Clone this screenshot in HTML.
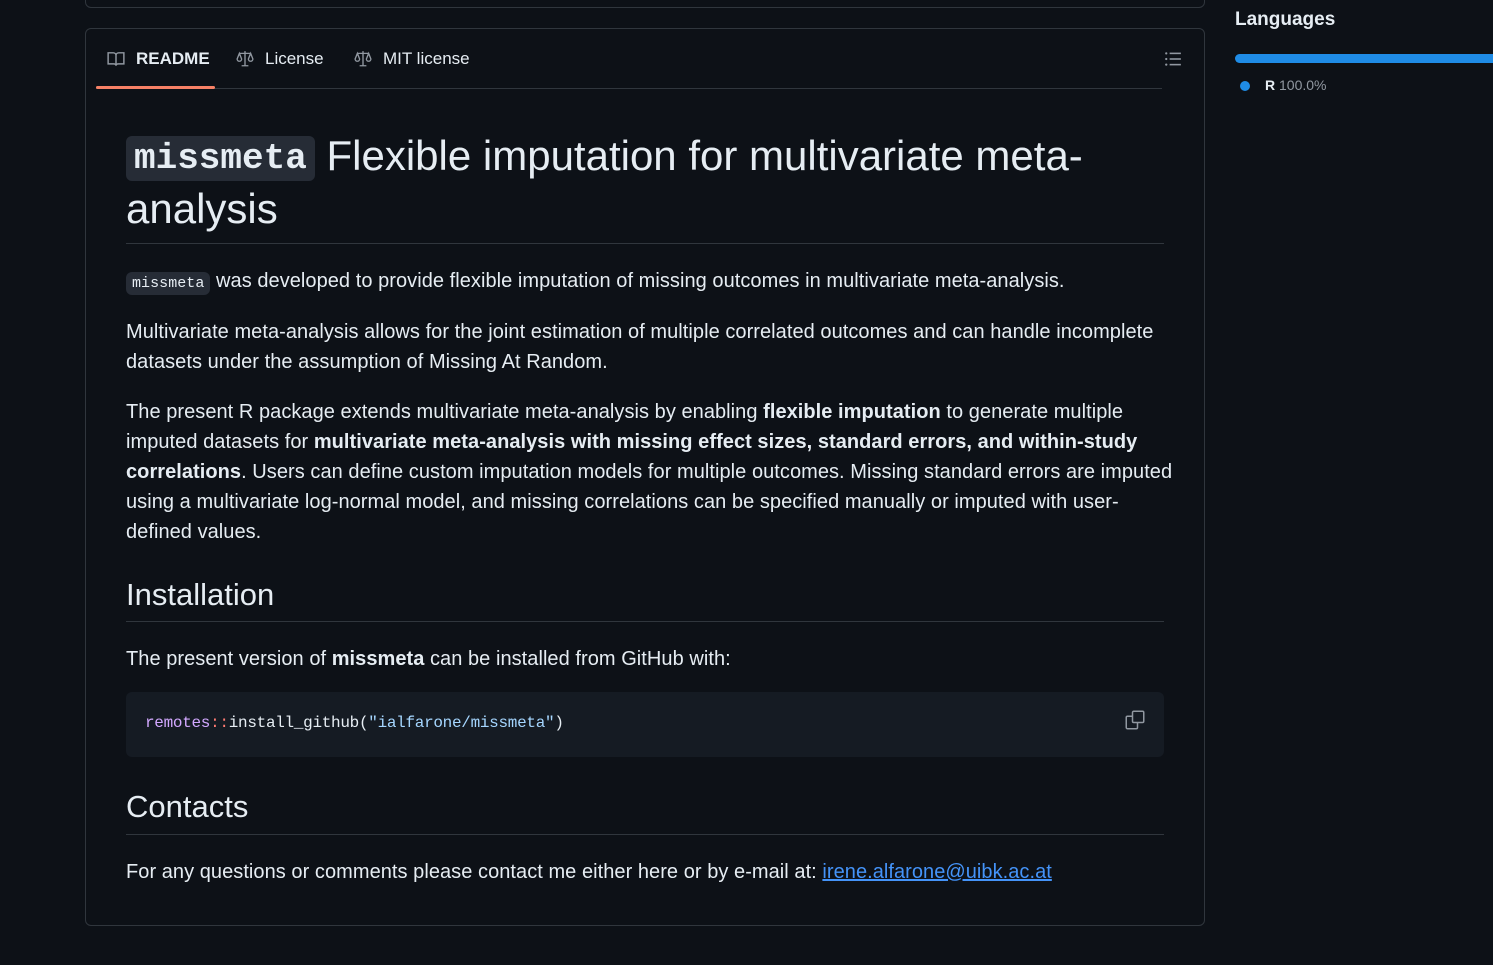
<!DOCTYPE html><html><head><meta charset="utf-8"><style>
body{margin:0;background:#0d1117;width:1493px;height:965px;overflow:hidden;font-family:"Liberation Sans",sans-serif;color:#e6edf3;position:relative}
.box0{position:absolute;left:85px;top:-20px;width:1118px;height:26px;border:1px solid #30363d;border-radius:6px}
.box{position:absolute;left:85px;top:28px;width:1118px;height:896px;border:1px solid #30363d;border-radius:6px}
.tabs{position:absolute;left:0;top:0;width:1066px;height:59px;border-bottom:1px solid #30363d;margin-left:10px}
.tab{position:absolute;top:20px;font-size:17px;color:#e6edf3;display:flex;align-items:center;gap:10px}
.under{position:absolute;left:0;top:57px;width:119px;height:3px;background:#f78166;border-radius:2px}
.c{position:absolute;left:40px;width:1038px}
p{margin:0;font-size:20px;line-height:30px;white-space:nowrap;letter-spacing:0.05px}
code{font-family:"Liberation Mono",monospace;background:#262c36;border-radius:6px;padding:3px 6px;font-size:15px}
h1{margin:0;font-size:42px;font-weight:normal;line-height:53px}
h2{margin:0;font-size:31px;font-weight:normal;line-height:36px}
hr{border:0;border-top:1px solid #30363d;margin:0}
b{font-weight:bold}
.pre{position:absolute;left:40px;top:663px;width:1038px;height:65px;background:#151b23;border-radius:6px}
</style></head><body>
<div class="box0"></div>
<div class="box">
 <div class="tabs">
  <div class="tab" style="left:10px;font-weight:bold"><svg width="20" height="18" viewBox="0 0 16 16" fill="none" stroke="#9198a1" stroke-width="1.3"><path d="M1 2.5h4.5c1.4 0 2.5 1 2.5 2.3V14c0-1-1-1.7-2-1.7H1zM15 2.5h-4.5C9.1 2.5 8 3.5 8 4.8V14c0-1 1-1.7 2-1.7h5z"/></svg>README</div>
  <div class="tab" style="left:139px"><svg width="20" height="18" viewBox="0 0 16 16" fill="none" stroke="#9198a1" stroke-width="1.2"><path d="M8 1v13M3 3h10M5 14h6M3 3l-2 5a2 2 0 004 0zM13 3l-2 5a2 2 0 004 0z"/></svg>License</div>
  <div class="tab" style="left:257px"><svg width="20" height="18" viewBox="0 0 16 16" fill="none" stroke="#9198a1" stroke-width="1.2"><path d="M8 1v13M3 3h10M5 14h6M3 3l-2 5a2 2 0 004 0zM13 3l-2 5a2 2 0 004 0z"/></svg>MIT license</div>
  <div class="under"></div>
 </div>
 <svg style="position:absolute;left:1077px;top:21px" width="20" height="18" viewBox="0 0 16 16" fill="#9198a1"><circle cx="2" cy="3" r="1"/><circle cx="2" cy="8" r="1"/><circle cx="2" cy="13" r="1"/><rect x="5" y="2.3" width="10" height="1.4"/><rect x="5" y="7.3" width="10" height="1.4"/><rect x="5" y="12.3" width="10" height="1.4"/></svg>
 <div class="c" style="top:100px"><h1><code style="font-size:36px;padding:2px 8px;font-weight:bold;line-height:1;vertical-align:2px">missmeta</code> Flexible imputation for multivariate meta-<br>analysis</h1></div>
 <div class="c" style="top:214px"><hr></div>
 <div class="c" style="top:237px"><p><code>missmeta</code> was developed to provide flexible imputation of missing outcomes in multivariate meta-analysis.</p></div>
 <div class="c" style="top:288px"><p>Multivariate meta-analysis allows for the joint estimation of multiple correlated outcomes and can handle incomplete<br>datasets under the assumption of Missing At Random.</p></div>
 <div class="c" style="top:368px"><p>The present R package extends multivariate meta-analysis by enabling <b>flexible imputation</b> to generate multiple<br>imputed datasets for <b>multivariate meta-analysis with missing effect sizes, standard errors, and within-study<br>correlations</b>. Users can define custom imputation models for multiple outcomes. Missing standard errors are imputed<br>using a multivariate log-normal model, and missing correlations can be specified manually or imputed with user-<br>defined values.</p></div>
 <div class="c" style="top:548px"><h2>Installation</h2></div>
 <div class="c" style="top:592px"><hr></div>
 <div class="c" style="top:615px"><p>The present version of <b>missmeta</b> can be installed from GitHub with:</p></div>
 <div class="pre"><div style="position:absolute;left:19px;top:22px;font-family:'Liberation Mono',monospace;font-size:16px;white-space:nowrap;letter-spacing:-0.3px"><span style="color:#d2a8ff">remotes</span><span style="color:#ff7b72">::</span>install_github(<span style="color:#a5d6ff">"ialfarone/missmeta"</span>)</div>
 <svg style="position:absolute;right:19px;top:18px" width="20" height="20" viewBox="0 0 16 16" fill="none" stroke="#9198a1" stroke-width="1.2"><rect x="1" y="5" width="9" height="10" rx="1"/><rect x="6" y="1" width="9" height="9" rx="1" fill="#151b23"/></svg></div>
 <div class="c" style="top:760px"><h2>Contacts</h2></div>
 <div class="c" style="top:805px"><hr></div>
 <div class="c" style="top:828px"><p>For any questions or comments please contact me either here or by e-mail at: <a style="color:#4493f8;text-decoration:underline">irene.alfarone@uibk.ac.at</a></p></div>
</div>
<div style="position:absolute;left:1235px;top:9px;font-size:19px;font-weight:bold">Languages</div>
<div style="position:absolute;left:1235px;top:54px;width:270px;height:9px;background:#1f8ce6;border-radius:5px"></div>
<div style="position:absolute;left:1240px;top:81px;width:10px;height:10px;border-radius:50%;background:#1f8ce6"></div>
<div style="position:absolute;left:1265px;top:77px;font-size:14px;color:#9198a1"><b style="color:#e6edf3">R</b> 100.0%</div>
</body></html>
